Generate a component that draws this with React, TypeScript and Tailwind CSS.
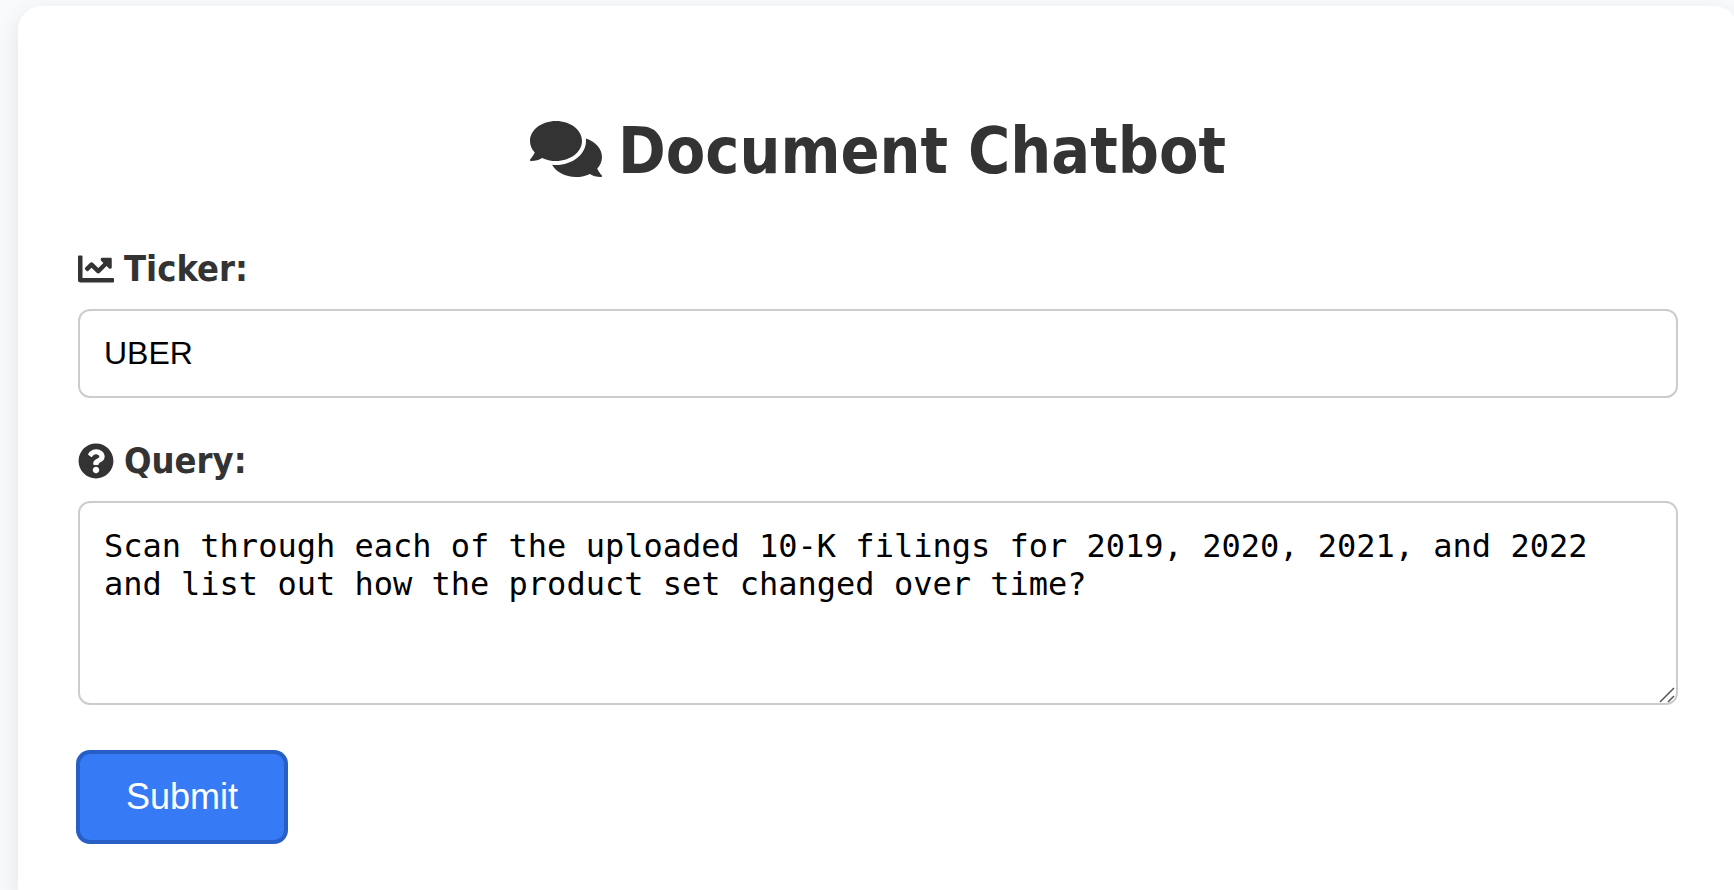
import { FaChartLine, FaComments, FaQuestionCircle } from "react-icons/fa";

const labelClass =
  "mb-4 flex items-center gap-[10px] font-['DejaVu_Sans_Condensed','DejaVu_Sans',sans-serif] text-[36px] leading-[48px] font-bold text-[#333]";

const fieldClass =
  "block w-full rounded-xl border-2 border-[#ccc] bg-white p-6 text-[32px] text-black outline-none";

export default function App() {
  return (
    <div className="flex min-h-screen overflow-hidden bg-[#f8fafc] pt-[6px] pl-[18px]">
      <main className="-mr-1 min-w-0 flex-1 rounded-t-[24px] bg-white px-[60px] pt-[105px] pb-10 shadow-[0_8px_24px_rgba(0,0,0,0.1)]">
        <h1 className="mb-[54px] flex items-center justify-center gap-4 font-['DejaVu_Sans_Condensed','DejaVu_Sans',sans-serif] text-[64px] leading-[80px] font-bold text-[#333]">
          <FaComments className="mb-1 h-16 w-[72px] shrink-0" aria-hidden="true" />
          Document Chatbot
        </h1>
        <form onSubmit={(event) => event.preventDefault()}>
          <label htmlFor="ticker" className={labelClass}>
            <FaChartLine aria-hidden="true" />
            Ticker:
          </label>
          <input
            id="ticker"
            type="text"
            defaultValue="UBER"
            className={`${fieldClass} mb-[39px] font-['Liberation_Sans',Arial,sans-serif] leading-[37px]`}
          />

          <label htmlFor="query" className={labelClass}>
            <FaQuestionCircle aria-hidden="true" />
            Query:
          </label>
          <div className="relative mb-[47px]">
            <textarea
              id="query"
              rows={4}
              spellCheck={false}
              defaultValue="Scan through each of the uploaded 10-K filings for 2019, 2020, 2021, and 2022 and list out how the product set changed over time?"
              className={`${fieldClass} resize-none overflow-hidden font-['DejaVu_Sans_Mono',monospace] leading-[38px]`}
            />
            <svg
              viewBox="0 0 16 16"
              className="pointer-events-none absolute right-[3px] bottom-[2px] size-4 fill-none stroke-[#555] stroke-[1.5]"
              aria-hidden="true"
            >
              <path d="M1 15 15 1M9 15 15 9" />
            </svg>
          </div>

          <button
            type="submit"
            className="block rounded-xl border-2 border-[#285fc7] bg-[#367af6] px-[46px] py-[22px] font-['Liberation_Sans',Arial,sans-serif] text-[36px] leading-[42px] text-white ring-2 ring-[#285fc7]"
          >
            Submit
          </button>
        </form>
      </main>
    </div>
  );
}
